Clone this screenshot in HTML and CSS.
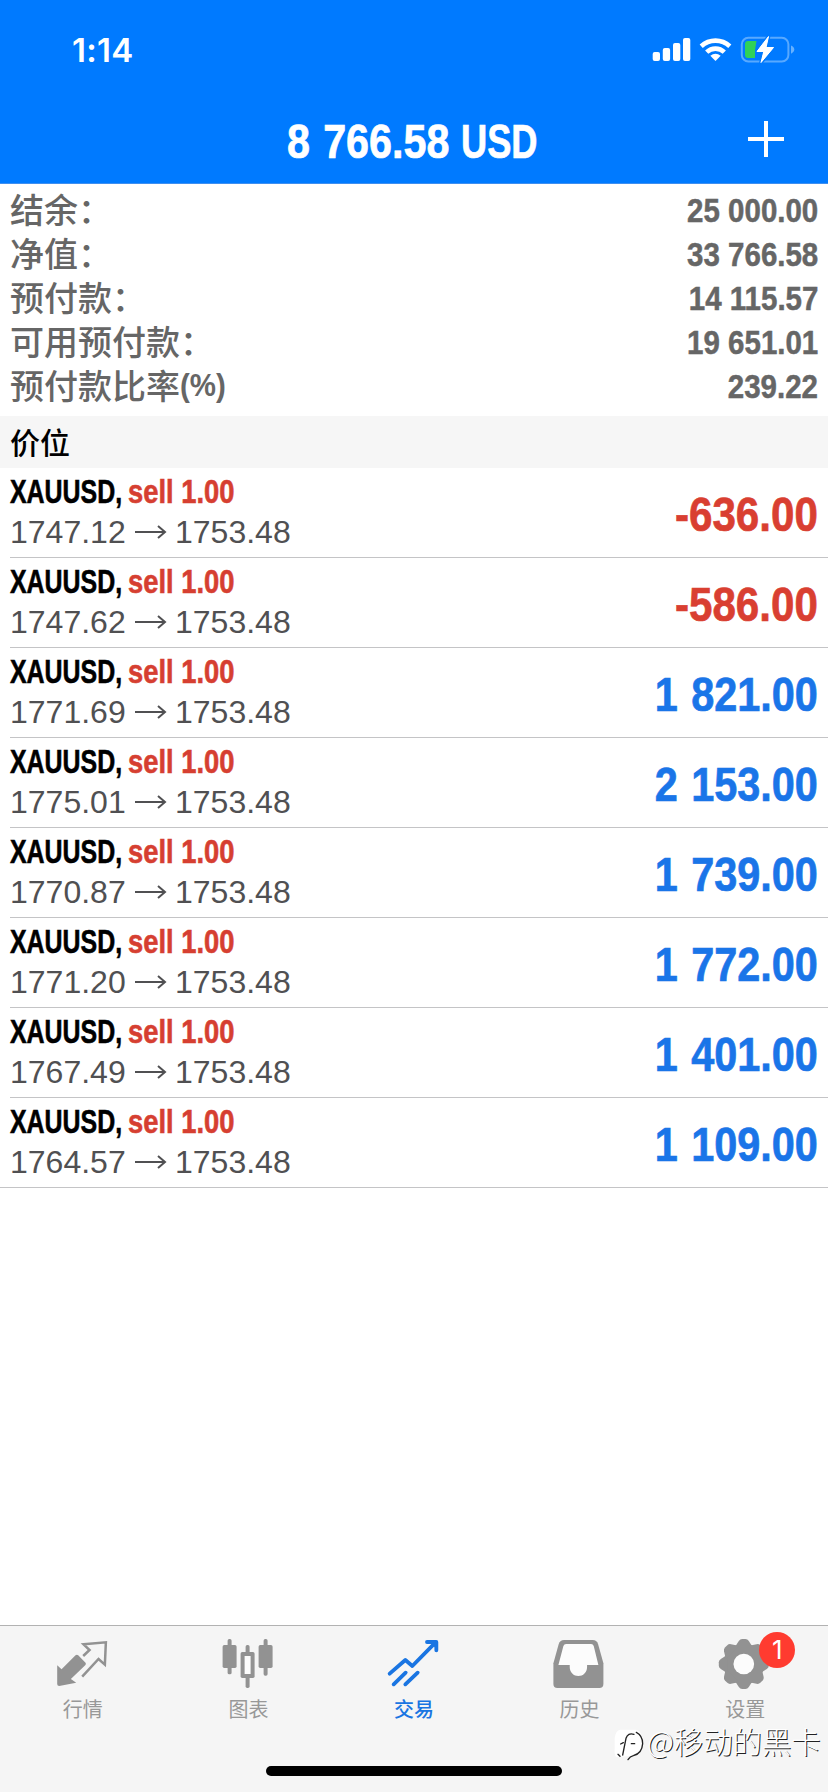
FILE: index.html
```html
<!DOCTYPE html>
<html lang="zh-CN">
<head>
<meta charset="utf-8">
<title>交易</title>
<link rel="stylesheet" href="styles.css">
</head>
<body>
<div class="screen">
  <header class="header">
    <div class="status">
      <span class="clock">1:14</span>
      <svg class="status-icons" viewBox="652 34 144 30">
        <g fill="#fff">
          <rect x="652.7" y="52" width="7.3" height="9" rx="2"/>
          <rect x="662.8" y="48" width="7.3" height="13" rx="2"/>
          <rect x="673" y="43" width="7.3" height="18" rx="2"/>
          <rect x="683" y="38" width="7.3" height="23" rx="2"/>
          <path d="M715.5 61L710.3 55.8Q715.5 51.8 720.7 55.8Z"/>
        </g>
        <g fill="none" stroke="#fff" stroke-width="4.6">
          <path d="M701.2 46.2A21 21 0 0 1 729.8 46.2"/>
          <path d="M706.7 52.2A12.6 12.6 0 0 1 724.3 52.2"/>
        </g>
        <rect x="741.8" y="37.8" width="46.6" height="23.6" rx="6.5" fill="none" stroke="#58a9ff" stroke-width="2"/>
        <path d="M791 45.5Q794.3 47 794.3 49.6Q794.3 52.2 791 53.7Z" fill="#66b1ff"/>
        <path d="M748 41H756.5L755 50V58H748Q745 58 745 55V44Q745 41 748 41Z" fill="#30d158"/>
        <path d="M768.5 36.5L757 51.5H763.8L761 62.5L773.5 47.5H766Z" fill="#fff" stroke="#007aff" stroke-width="3.6" paint-order="stroke" stroke-linejoin="round"/>
        <path d="M768.5 36.5L757 51.5H763.8L761 62.5L773.5 47.5H766Z" fill="#fff" stroke="#fff" stroke-width="1" stroke-linejoin="round"/>
      </svg>
    </div>
    <div class="nav">
      <h1 class="title"><span class="amount">8 766.58</span><span class="currency">USD</span></h1>
      <svg class="plus" viewBox="0 0 36 36"><path d="M18 0V36M0 18H36" stroke="#fff" stroke-width="4"/></svg>
    </div>
  </header>

  <section class="summary">
    <div class="line"><span>结余：</span><b class="value">25 000.00</b></div>
    <div class="line"><span>净值：</span><b class="value">33 766.58</b></div>
    <div class="line"><span>预付款：</span><b class="value">14 115.57</b></div>
    <div class="line"><span>可用预付款：</span><b class="value">19 651.01</b></div>
    <div class="line"><span>预付款比率<i class="latin">(%)</i></span><b class="value">239.22</b></div>
  </section>
  <h2 class="section-title">价位</h2>

  <main class="positions" id="positions"></main>

  <nav class="tabbar">
    <div class="tabs">
      <div class="tab">
        <svg class="tab-icon" viewBox="164.4 78 168 168">
          <path d="M171 166L184 178L226 136Q230 132 234 136L256 158Q259 162 255 166L212 207L228 218L177 228Q171 228 171 222Z" fill="#929292"/>
          <path d="M249 138L268 120L250 103L317 97L314 164L295 147L246 200" fill="none" stroke="#929292" stroke-width="7.5"/>
        </svg>
        <span>行情</span>
      </div>
      <div class="tab">
        <svg class="tab-icon" viewBox="661.2 78 168 168">
          <g fill="#929292">
            <rect x="684" y="87" width="12" height="106" rx="5"/><rect x="669" y="105" width="42" height="69" rx="5"/>
            <rect x="738" y="105" width="12" height="129" rx="5"/><rect x="723" y="126" width="42" height="78" rx="5"/>
            <rect x="792" y="87" width="12" height="110" rx="5"/><rect x="777" y="105" width="42" height="69" rx="5"/>
          </g>
          <rect x="735" y="138" width="18" height="54" fill="#fcfcfc"/>
        </svg>
        <span>图表</span>
      </div>
      <div class="tab active">
        <svg class="tab-icon" viewBox="258 78 168 168">
          <g fill="none" stroke="#1a75e2" stroke-width="11.5" stroke-linecap="round" stroke-linejoin="round">
            <path d="M269 191L316 150L337 168L406 98"/>
            <path d="M381 96H409V121M281 223L317 188M316 223L353 188"/>
          </g>
          <path d="M388 96H409V116Z" fill="#1a75e2"/>
        </svg>
        <span>交易</span>
      </div>
      <div class="tab">
        <svg class="tab-icon" viewBox="70.8 78 168 168">
          <path d="M75 160L91 102Q95 90 107 90H193Q205 90 209 102L225 160V222Q225 234 213 234H87Q75 234 75 222Z" fill="#929292"/>
          <path d="M90 165L105 108Q107 102 113 102H188Q194 102 196 108L210 165H176V171C176 188 164 198 150 198S124 188 124 171V165Z" fill="#fcfcfc"/>
        </svg>
        <span>历史</span>
      </div>
      <div class="tab">
        <svg class="tab-icon" viewBox="567.6 78 168 168">
          <defs><path id="tooth" d="M621 112L633 93Q637 87 643 87H653Q659 87 663 93L675 112Z"/></defs>
          <g fill="#929292">
            <circle cx="648" cy="162" r="61"/>
            <use href="#tooth"/><use href="#tooth" transform="rotate(45 648 162)"/>
            <use href="#tooth" transform="rotate(90 648 162)"/><use href="#tooth" transform="rotate(135 648 162)"/>
            <use href="#tooth" transform="rotate(180 648 162)"/><use href="#tooth" transform="rotate(225 648 162)"/>
            <use href="#tooth" transform="rotate(270 648 162)"/><use href="#tooth" transform="rotate(315 648 162)"/>
          </g>
          <circle cx="648" cy="162" r="31" fill="#fcfcfc"/>
        </svg>
        <span>设置</span>
        <em class="badge">1</em>
      </div>
    </div>
    <div class="home-indicator"></div>
  </nav>

  <div class="watermark">
    <svg class="watermark-logo" viewBox="0 0 90 100">
      <path d="M18 4H66Q86 10 86 40Q84 82 44 84L8 86Q0 84 2 60V30Q4 8 18 4Z" fill="#fff"/>
      <g fill="none" stroke="#222" stroke-width="4" stroke-linecap="round">
        <path d="M67 12Q86 22 86 46Q84 76 58 82Q48 84 42 94"/>
        <path d="M60 18Q42 12 36 30L26 80M20 47L28 43M52 46H62M18 84L12 78"/>
      </g>
    </svg>
    <span>@移动的黑卡</span>
  </div>
</div>
<script src="positions.js"></script>
</body>
</html>
```
FILE: styles.css
```css
* { box-sizing: border-box; }
body {
  margin: 0;
  background: #fff;
  font-family: "Liberation Sans", "Noto Sans CJK SC", sans-serif;
}
.screen {
  position: relative;
  display: flex;
  flex-direction: column;
  width: 828px;
  height: 1792px;
  overflow: hidden;
}
.header {
  flex: none;
  height: 184px;
  background: #007aff;
  border-bottom: 1px solid #3f8ff0;
  color: #fff;
}
.status {
  display: flex;
  justify-content: space-between;
  height: 96px;
  padding: 34px 32px 0 72px;
}
.clock {
  font: 600 33px/33px Inter, sans-serif;
  letter-spacing: .3px;
}
.status-icons { width: 144px; height: 30px; }
.nav {
  display: grid;
  grid-template-columns: 1fr auto 1fr;
  align-items: center;
  height: 88px;
  padding: 0 44px 0 42px;
}
.title {
  grid-column: 2;
  display: flex;
  width: 252px;
  margin: 3px 0 0;
  font-size: 48px;
  line-height: 56px;
  font-weight: 700;
  white-space: nowrap;
  -webkit-text-stroke: .7px;
}
.amount {
  flex: none;
  width: 174px;
  word-spacing: 2px;
  transform: scaleX(.86);
  transform-origin: left;
}
.currency { transform: scaleX(.755); transform-origin: left; }
.plus { width: 36px; height: 36px; justify-self: end; margin-top: -2px; grid-column: 3; }

.summary {
  flex: none;
  height: 232px;
  padding: 3px 10px 0;
  color: #666;
}
.line {
  display: flex;
  justify-content: space-between;
  height: 44px;
  font: 500 34px/44px "Noto Sans CJK JP", "Noto Sans CJK SC", sans-serif;
  font-family: "Noto Sans CJK SC", sans-serif;
  white-space: nowrap;
}
.value {
  margin-top: 1px;
  font: 700 34px/44px "Liberation Sans", sans-serif;
  transform: scaleX(.867);
  transform-origin: right;
  -webkit-text-stroke: .5px;
}
.latin {
  display: inline-block;
  height: 44px;
  vertical-align: top;
  font: 700 32px/44px "Liberation Sans", sans-serif;
  transform: scaleX(.92);
  transform-origin: left;
}
.section-title {
  flex: none;
  height: 52px;
  margin: 0;
  padding-left: 10px;
  background: #f6f6f6;
  color: #000;
  font: 500 30px/50px "Noto Sans CJK SC", sans-serif;
}

.positions { flex: 1; }
.position {
  display: flex;
  justify-content: space-between;
  height: 90px;
  margin-left: 10px;
  padding: 3px 10px 0 0;
  border-bottom: 1px solid #c4c4c6;
}
.position:last-child { margin-left: 0; padding-left: 10px; }
.deal {
  display: flex;
  height: 42px;
  font-size: 33px;
  line-height: 41px;
  font-weight: 700;
  white-space: nowrap;
  -webkit-text-stroke: .6px;
}
.symbol { width: 118px; color: #000; transform: scaleX(.755); transform-origin: left; }
.side { color: #d63f31; transform: scaleX(.829); transform-origin: left; }
.prices {
  display: flex;
  align-items: center;
  height: 38px;
  color: #505052;
  font-size: 32px;
  line-height: 38px;
}
.price { width: 125px; }
.arrow { width: 32px; height: 16px; margin: -1px 8px 0 0; }
.profit {
  margin-top: 16px;
  font-size: 48px;
  line-height: 56px;
  font-weight: 700;
  white-space: nowrap;
  word-spacing: 2px;
  transform: scaleX(.863);
  transform-origin: right;
  -webkit-text-stroke: .7px;
}
.gain { color: #1a75e8; }
.loss { color: #d93f31; transform: scaleX(.877); }

.tabbar {
  flex: none;
  height: 167px;
  background: #f5f5f5;
  border-top: 1px solid #b2b2b2;
}
.tabs { display: grid; grid-template-columns: repeat(5, 1fr); height: 140px; }
.tab {
  position: relative;
  display: flex;
  flex-direction: column;
  align-items: center;
  padding-top: 10px;
  color: #989898;
  font: 400 20px/28px "Noto Sans CJK SC", sans-serif;
}
.tab.active { color: #1a75e2; font-weight: 500; }
.tab-icon { width: 56px; height: 56px; margin-bottom: 3px; }
.badge {
  position: absolute;
  left: 97px;
  top: 6px;
  width: 36px;
  height: 36px;
  border-radius: 50%;
  background: #ff3b30;
  color: #fff;
  font: 400 26px/36px Inter, sans-serif;
  text-align: center;
}
.home-indicator {
  width: 296px;
  height: 10px;
  margin: 0 auto;
  border-radius: 5px;
  background: #000;
}
.watermark {
  position: absolute;
  left: 614px;
  top: 1724px;
  display: flex;
  align-items: center;
  gap: 3px;
  color: #fff;
  font: 300 29.4px/34px "Noto Sans CJK SC", sans-serif;
  text-shadow: 1px 1px 0 #222;
  white-space: nowrap;
}
.watermark span { margin-top: -6px; }
.watermark-logo { width: 30px; height: 34px; margin-top: 4px; }
```
FILE: positions.js
```js
const positions = [
  ["1747.12", "-636.00"],
  ["1747.62", "-586.00"],
  ["1771.69", "1 821.00"],
  ["1775.01", "2 153.00"],
  ["1770.87", "1 739.00"],
  ["1771.20", "1 772.00"],
  ["1767.49", "1 401.00"],
  ["1764.57", "1 109.00"],
];

document.getElementById("positions").innerHTML = positions.map(([open, profit]) => `
  <article class="position">
    <div>
      <div class="deal"><span class="symbol">XAUUSD,</span><span class="side">sell 1.00</span></div>
      <div class="prices">
        <span class="price">${open}</span>
        <svg class="arrow" viewBox="0 0 32 16"><path d="M0 8H30M23 2L30 8L23 14" fill="none" stroke="#505052" stroke-width="2"/></svg>
        <span>1753.48</span>
      </div>
    </div>
    <div class="profit ${profit.startsWith("-") ? "loss" : "gain"}">${profit}</div>
  </article>`).join("");
```
